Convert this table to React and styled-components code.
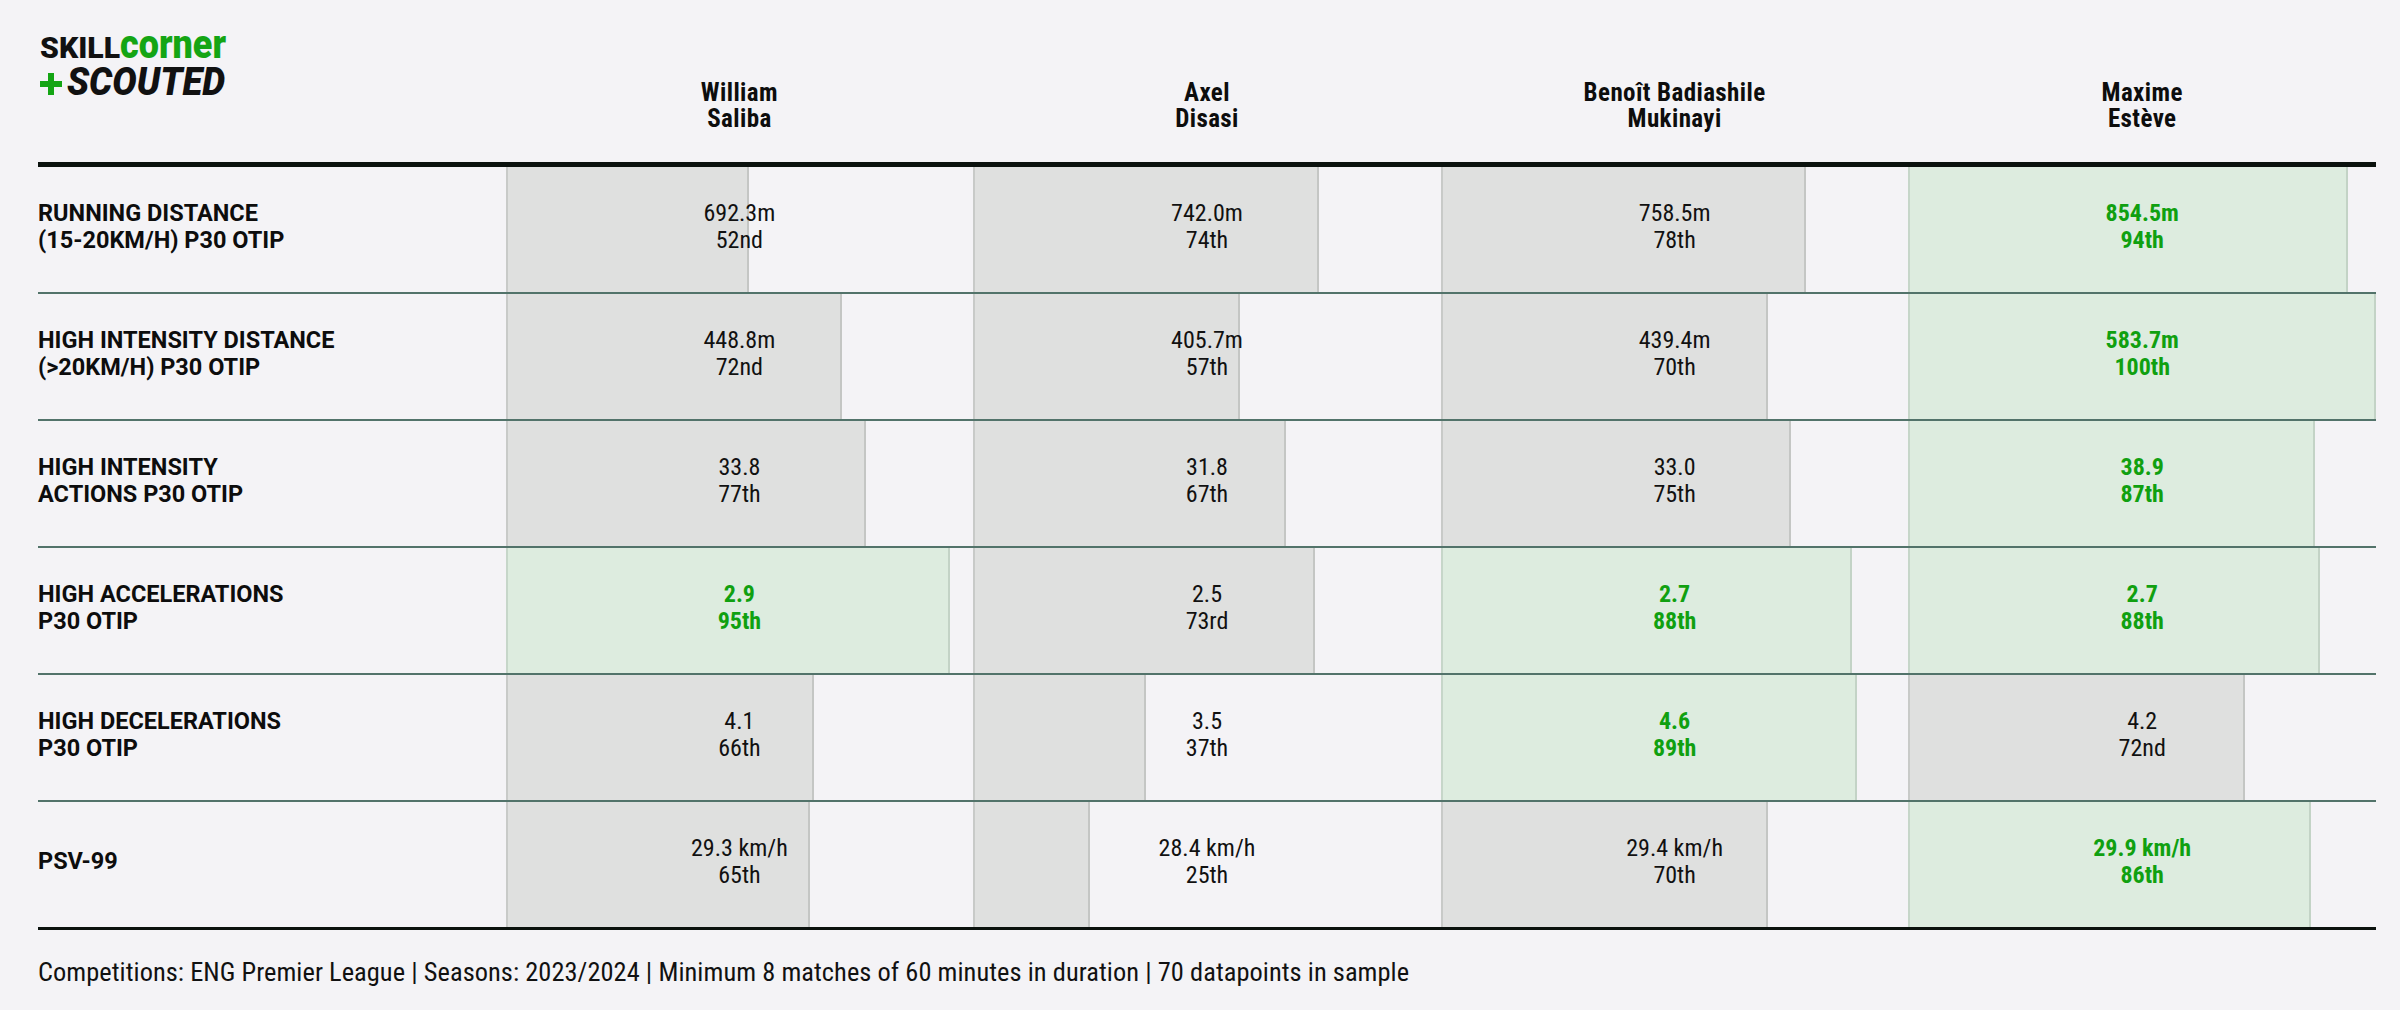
import React from "react";
import styled, { createGlobalStyle } from "styled-components";

const GlobalStyle = createGlobalStyle`
  html, body {
    margin: 0;
    padding: 0;
    background: #f4f3f6;
  }
  body {
    font-family: Roboto, "Liberation Sans", sans-serif;
    color: #111;
  }
`;

const players = [
  ["William", "Saliba"],
  ["Axel", "Disasi"],
  ["Benoît Badiashile", "Mukinayi"],
  ["Maxime", "Estève"],
];

const rows = [
  {
    label: ["RUNNING DISTANCE", "(15-20KM/H) P30 OTIP"],
    values: [
      ["692.3m", 52, "52nd"],
      ["742.0m", 74, "74th"],
      ["758.5m", 78, "78th"],
      ["854.5m", 94, "94th"],
    ],
  },
  {
    label: ["HIGH INTENSITY DISTANCE", "(>20KM/H) P30 OTIP"],
    values: [
      ["448.8m", 72, "72nd"],
      ["405.7m", 57, "57th"],
      ["439.4m", 70, "70th"],
      ["583.7m", 100, "100th"],
    ],
  },
  {
    label: ["HIGH INTENSITY", "ACTIONS P30 OTIP"],
    values: [
      ["33.8", 77, "77th"],
      ["31.8", 67, "67th"],
      ["33.0", 75, "75th"],
      ["38.9", 87, "87th"],
    ],
  },
  {
    label: ["HIGH ACCELERATIONS", "P30 OTIP"],
    values: [
      ["2.9", 95, "95th"],
      ["2.5", 73, "73rd"],
      ["2.7", 88, "88th"],
      ["2.7", 88, "88th"],
    ],
  },
  {
    label: ["HIGH DECELERATIONS", "P30 OTIP"],
    values: [
      ["4.1", 66, "66th"],
      ["3.5", 37, "37th"],
      ["4.6", 89, "89th"],
      ["4.2", 72, "72nd"],
    ],
  },
  {
    label: ["PSV-99"],
    values: [
      ["29.3 km/h", 65, "65th"],
      ["28.4 km/h", 25, "25th"],
      ["29.4 km/h", 70, "70th"],
      ["29.9 km/h", 86, "86th"],
    ],
  },
];

const GREEN = "#10a010";

const Page = styled.div`
  padding: 26px 24px 40px 38px;
`;

const Header = styled.div`
  display: grid;
  grid-template-columns: repeat(5, 1fr);
  height: 136px;
`;

const Logo = styled.svg`
  display: block;
  width: 192px;
  height: 80px;
  overflow: visible;
`;

const PlayerName = styled.div`
  align-self: end;
  padding-bottom: 30px;
  text-align: center;
  font-family: "Roboto Condensed", Roboto, sans-serif;
  font-weight: 700;
  font-size: 25px;
  letter-spacing: 0.4px;
  line-height: 26px;
  color: #0d0d0d;
`;

const Table = styled.div`
  border-top: 5px solid #0b120e;
  border-bottom: 3px solid #0b120e;
`;

const Row = styled.div`
  display: grid;
  grid-template-columns: repeat(5, 1fr);
  height: 125px;
  & + & {
    border-top: 2px solid #52736a;
  }
`;

const Label = styled.div`
  align-self: center;
  padding-bottom: 6px;
  font-weight: 700;
  font-size: 23.5px;
  line-height: 27px;
  color: #0d0d0d;
`;

const Cell = styled.div`
  display: grid;
  grid-template-areas: "stack";
  height: 100%;
`;

const Bar = styled.div`
  grid-area: stack;
  justify-self: start;
  height: 100%;
  box-sizing: border-box;
  background: ${(p) => (p.$good ? "#ddecdf" : "#dfe0df")};
  border-left: 2px solid ${(p) => (p.$good ? "#c6d6c9" : "#c8cac8")};
  border-right: 2px solid ${(p) => (p.$good ? "#c3d3c6" : "#c4c6c4")};
`;

const Value = styled.div`
  grid-area: stack;
  place-self: center;
  padding-bottom: 6px;
  text-align: center;
  font-family: "Roboto Condensed", Roboto, sans-serif;
  font-size: 24px;
  line-height: 27px;
  font-weight: ${(p) => (p.$good ? 700 : 400)};
  color: ${(p) => (p.$good ? GREEN : "#111")};
`;

const Footer = styled.div`
  margin-top: 28px;
  font-family: "Roboto Condensed", Roboto, sans-serif;
  font-size: 26.4px;
  letter-spacing: 0.05px;
  line-height: 28px;
  color: #111;
`;

const SkillcornerLogo = () => (
  <Logo viewBox="0 0 192 80">
    <text
      x="2"
      y="32"
      fontFamily="Roboto, sans-serif"
      fontWeight="900"
      fontSize="30"
      textLength="80"
      lengthAdjust="spacingAndGlyphs"
      fill="#111"
    >
      SKILL
    </text>
    <text
      x="82"
      y="32"
      fontFamily="Roboto, sans-serif"
      fontWeight="900"
      fontSize="40"
      textLength="106"
      lengthAdjust="spacingAndGlyphs"
      fill="#14a514"
    >
      corner
    </text>
    <rect x="2" y="55" width="22" height="6" fill="#14a514" />
    <rect x="10" y="47" width="6" height="22" fill="#14a514" />
    <text
      x="29"
      y="69"
      fontFamily="Roboto, sans-serif"
      fontWeight="900"
      fontStyle="italic"
      fontSize="38"
      textLength="158"
      lengthAdjust="spacingAndGlyphs"
      fill="#111"
    >
      SCOUTED
    </text>
  </Logo>
);

export default function App() {
  return (
    <>
      <GlobalStyle />
      <Page>
        <Header>
          <div>
            <SkillcornerLogo />
          </div>
          {players.map(([first, last]) => (
            <PlayerName key={last}>
              {first}
              <br />
              {last}
            </PlayerName>
          ))}
        </Header>
        <Table>
          {rows.map((row) => (
            <Row key={row.label.join(" ")}>
              <Label>
                {row.label.map((line, i) => (
                  <div key={i}>{line}</div>
                ))}
              </Label>
              {row.values.map(([value, pct, rank], i) => {
                const good = pct >= 80;
                return (
                  <Cell key={i}>
                    <Bar $good={good} style={{ width: `${pct}%` }} />
                    <Value $good={good}>
                      {value}
                      <br />
                      {rank}
                    </Value>
                  </Cell>
                );
              })}
            </Row>
          ))}
        </Table>
        <Footer>
          Competitions: ENG Premier League | Seasons: 2023/2024 | Minimum 8
          matches of 60 minutes in duration | 70 datapoints in sample
        </Footer>
      </Page>
    </>
  );
}
